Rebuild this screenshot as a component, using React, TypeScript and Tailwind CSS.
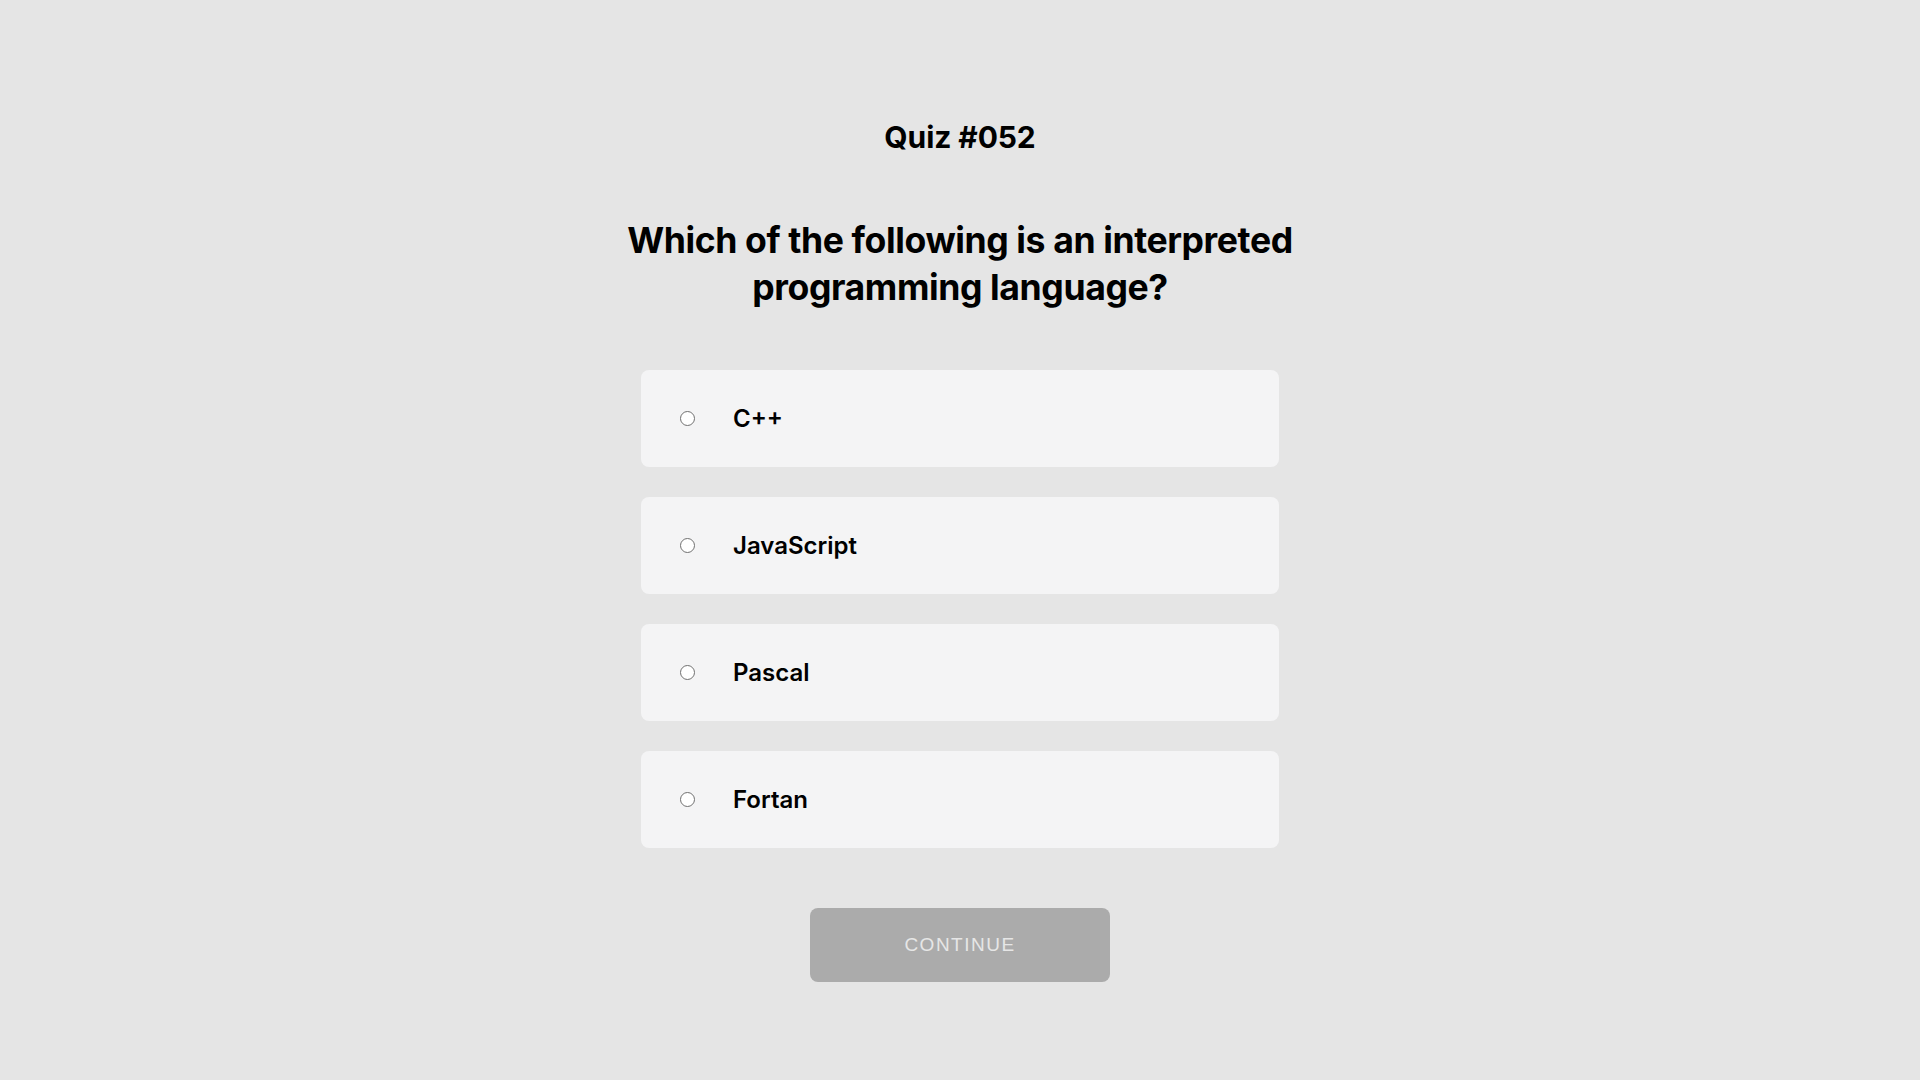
import React from "react";

const options = ["C++", "JavaScript", "Pascal", "Fortan"];

export default function App() {
  return (
    <div
      className="min-h-screen w-full bg-[#e5e5e5] flex flex-col items-center text-black"
      style={{ fontFamily: "Inter, 'Noto Sans', sans-serif" }}
    >
      <h1 className="pt-[122px] text-[30px] leading-[30px] font-bold tracking-[-0.1px]">Quiz #052</h1>
      <h2 className="mt-[65px] max-w-[780px] text-center text-[35.6px] leading-[47px] font-bold tracking-[-0.4px]">
        Which of the following is an interpreted programming language?
      </h2>
      <div className="mt-[59px] w-[638px] flex flex-col gap-[30px]">
        {options.map((o) => (
          <label
            key={o}
            className="h-[97px] rounded-[8px] bg-[#f4f4f5] flex items-center pl-[39px] cursor-pointer"
          >
            <span className="w-[15px] h-[15px] rounded-full border border-[#707070] bg-white shrink-0" />
            <span className="ml-[38px] text-[24px] font-semibold leading-none">{o}</span>
          </label>
        ))}
      </div>
      <button
        className="mt-[60px] w-[300px] h-[74px] rounded-[8px] bg-[#ababab] text-[#e6e6e6] text-[19px] tracking-[1.5px]"
        style={{ fontFamily: "'Liberation Sans', Arial, sans-serif" }}
      >
        CONTINUE
      </button>
    </div>
  );
}
